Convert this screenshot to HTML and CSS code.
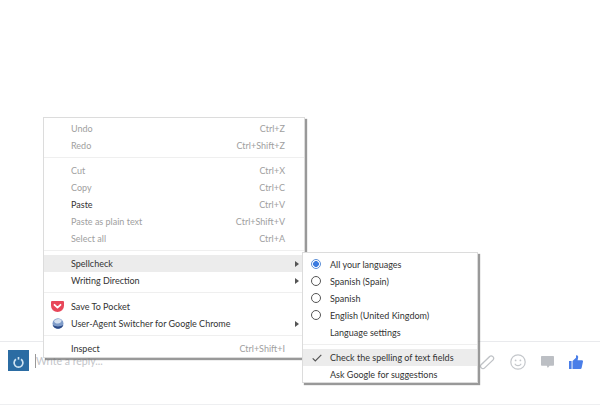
FILE: index.html
```html
<!DOCTYPE html>
<html lang="en">
<head>
<meta charset="utf-8">
<title>Context menu</title>
<link rel="stylesheet" href="styles.css">
</head>
<body>
<div class="page">
  <div class="spacer"></div>
  <footer class="composer">
    <div class="avatar">
      <svg width="21" height="21" viewBox="0 0 21 21"><path d="M8 9.200a4.400 4.400 0 1 0 5 0" fill="none" stroke="#cfe3f2" stroke-width="1.700"/><rect x="9.700" y="7" width="1.600" height="2.600" fill="#cfe3f2"/></svg>
    </div>
    <div class="caret"></div>
    <div class="placeholder">Write a reply...</div>
    <div class="tools">
      <svg class="tool" width="16" height="15" viewBox="0 0 16 15"><path d="M10.500 1.800 2.300 9.500a2.400 2.400 0 0 0 3.400 3.400l8.400-8a2.500 2.500 0 0 0-3.500-3.500L3.500 8.500" fill="none" stroke="#bfc2c6" stroke-width="1.300" stroke-linecap="round"/></svg>
      <svg class="tool" width="16" height="16" viewBox="0 0 16 16"><circle cx="8" cy="8" r="7.200" fill="none" stroke="#c4c7cb" stroke-width="1.200"/><circle cx="5.600" cy="6.400" r=".9" fill="#c4c7cb"/><circle cx="10.400" cy="6.400" r=".9" fill="#c4c7cb"/><path d="M4.800 9.700a3.600 3.600 0 0 0 6.400 0" fill="none" stroke="#c4c7cb" stroke-width="1.100"/></svg>
      <svg class="tool" width="13" height="12" viewBox="0 0 13 12"><path d="M.8 0h11.400a.8.800 0 0 1 .8.800v8.200a.8.800 0 0 1-.8.800H8.600L6.800 12l-1-2.200h-5a.8.800 0 0 1-.8-.8V.8A.8.800 0 0 1 .8 0z" fill="#bcbfc4"/></svg>
      <svg class="tool" width="14" height="14" viewBox="0 0 14 14"><path d="M0 6h2.600v8H0zM3.500 6 7 2.800V.4c1.500-.6 2.500.8 2.100 2.400L8.600 5.300H13c.7 0 1.100.7 1 1.300l-1.400 6.300c-.2.700-.6 1.100-1.200 1.100H3.500z" fill="#4a7ee8"/></svg>
    </div>
  </footer>
</div>

<div class="menu main-menu">
  <div class="item disabled"><span class="label">Undo</span><span class="key">Ctrl+Z</span></div>
  <div class="item disabled"><span class="label">Redo</span><span class="key">Ctrl+Shift+Z</span></div>
  <div class="sep"></div>
  <div class="item disabled"><span class="label">Cut</span><span class="key">Ctrl+X</span></div>
  <div class="item disabled"><span class="label">Copy</span><span class="key">Ctrl+C</span></div>
  <div class="item"><span class="label">Paste</span><span class="key">Ctrl+V</span></div>
  <div class="item disabled"><span class="label">Paste as plain text</span><span class="key">Ctrl+Shift+V</span></div>
  <div class="item disabled"><span class="label">Select all</span><span class="key">Ctrl+A</span></div>
  <div class="sep"></div>
  <div class="item active"><span class="label">Spellcheck</span><span class="arrow"></span></div>
  <div class="item"><span class="label">Writing Direction</span><span class="arrow"></span></div>
  <div class="sep sep-wide"></div>
  <div class="item">
    <svg class="icon" width="13" height="11" viewBox="0 0 13 11"><path d="M1 0h11a1 1 0 0 1 1 1v3.800a6.500 6.200 0 0 1-13 0V1a1 1 0 0 1 1-1z" fill="#e8475a"/><path d="M3.500 3.800 6.500 6.600 9.500 3.800" fill="none" stroke="#fff" stroke-width="1.800" stroke-linecap="round" stroke-linejoin="round"/></svg>
    <span class="label">Save To Pocket</span>
  </div>
  <div class="item">
    <svg class="icon globe" width="12" height="11" viewBox="0 0 12 11"><ellipse cx="6" cy="5.500" rx="5.500" ry="5.200" fill="#7f9cc9"/><path d="M2 3C3.500 .8 7.500 .3 9.500 2 10 4 7.500 5.800 4.500 5.500 3 5.200 2.200 4 2 3z" fill="#d3dfef"/><path d="M.6 6.800C3 9 9 9 11.400 6.800 10.500 9.800 8 10.700 6 10.700 4 10.700 1.500 9.800.6 6.800z" fill="#2c4a86"/></svg>
    <span class="label">User-Agent Switcher for Google Chrome</span><span class="arrow"></span>
  </div>
  <div class="sep"></div>
  <div class="item"><span class="label">Inspect</span><span class="key">Ctrl+Shift+I</span></div>
</div>

<div class="menu sub-menu">
  <div class="item"><span class="radio checked"></span><span class="label">All your languages</span></div>
  <div class="item"><span class="radio"></span><span class="label">Spanish (Spain)</span></div>
  <div class="item"><span class="radio"></span><span class="label">Spanish</span></div>
  <div class="item"><span class="radio"></span><span class="label">English (United Kingdom)</span></div>
  <div class="item"><span class="label">Language settings</span></div>
  <div class="sep"></div>
  <div class="item active">
    <svg class="check" width="10" height="8" viewBox="0 0 10 8"><path d="M.7 4.300 3.300 7 9.300 .8" fill="none" stroke="#555" stroke-width="1.200"/></svg>
    <span class="label">Check the spelling of text fields</span>
  </div>
  <div class="item"><span class="label">Ask Google for suggestions</span></div>
</div>
</body>
</html>
```

FILE: styles.css
```css
html, body {
  margin: 0;
  padding: 0;
  width: 600px;
  height: 406px;
  overflow: hidden;
  background: #fff;
  font-family: "Lato", "Open Sans", sans-serif;
}

.page {
  display: flex;
  flex-direction: column;
  height: 406px;
}

.spacer {
  flex: 0 0 341px;
}

.composer {
  flex: 0 0 64px;
  display: flex;
  align-items: flex-start;
  border-top: 1px solid #e9eaed;
  border-bottom: 1px solid #eeeff1;
  padding: 8px 17px 0 8px;
  box-sizing: border-box;
}

.avatar {
  width: 21px;
  height: 21px;
  background: #2b6ca3;
  display: flex;
  align-items: center;
  justify-content: center;
  overflow: hidden;
}

.caret {
  width: 1px;
  height: 14px;
  background: #999;
  margin: 4px 0 0 6px;
}

.placeholder {
  font-size: 10.500px;
  line-height: 22px;
  color: #c3c5c9;
  flex: 1;
}

.tools {
  display: flex;
  align-items: center;
  gap: 15px;
  height: 24px;
}

.tool {
  display: block;
}

.menu {
  position: absolute;
  box-sizing: border-box;
  background: #fff;
  border: 1px solid #dcdcdc;
  box-shadow: 2px 2px 1px rgba(110, 110, 110, 0.7);
  font-size: 9px;
  color: #333;
}

.main-menu {
  left: 43px;
  top: 117px;
  width: 262px;
  height: 241px;
  padding-top: 2px;
}

.sub-menu {
  left: 302px;
  top: 252px;
  width: 176px;
  height: 131px;
  padding-top: 3px;
}

.item {
  position: relative;
  display: flex;
  align-items: center;
  height: 17px;
  padding: 0 19px 0 27px;
}

.sub-menu .item {
  padding-left: 27px;
}

.item.active {
  background: #ececec;
}

.item.disabled,
.item.disabled .key {
  color: #a0a0a0;
}

.label {
  flex: 1;
  white-space: nowrap;
}

.key {
  color: #a0a0a0;
  white-space: nowrap;
}

.sep {
  height: 1px;
  background: #efefef;
  margin: 3px 0 4px;
}

.sep-wide {
  margin-bottom: 5px;
}

.arrow {
  position: absolute;
  right: 5px;
  top: 6px;
  border-left: 4px solid #555;
  border-top: 3px solid transparent;
  border-bottom: 3px solid transparent;
}

.icon {
  position: absolute;
  left: 7px;
  top: 3px;
}

.globe {
  left: 8px;
}

.check {
  position: absolute;
  left: 9px;
  top: 5px;
}

.radio {
  position: absolute;
  left: 8px;
  top: 3px;
  width: 10px;
  height: 10px;
  box-sizing: border-box;
  border: 1px solid #555;
  border-radius: 50%;
}

.radio.checked {
  border-color: #5b8fd8;
  background: radial-gradient(circle, #3b7be0 0 2.6px, #fff 3.2px);
}
```
